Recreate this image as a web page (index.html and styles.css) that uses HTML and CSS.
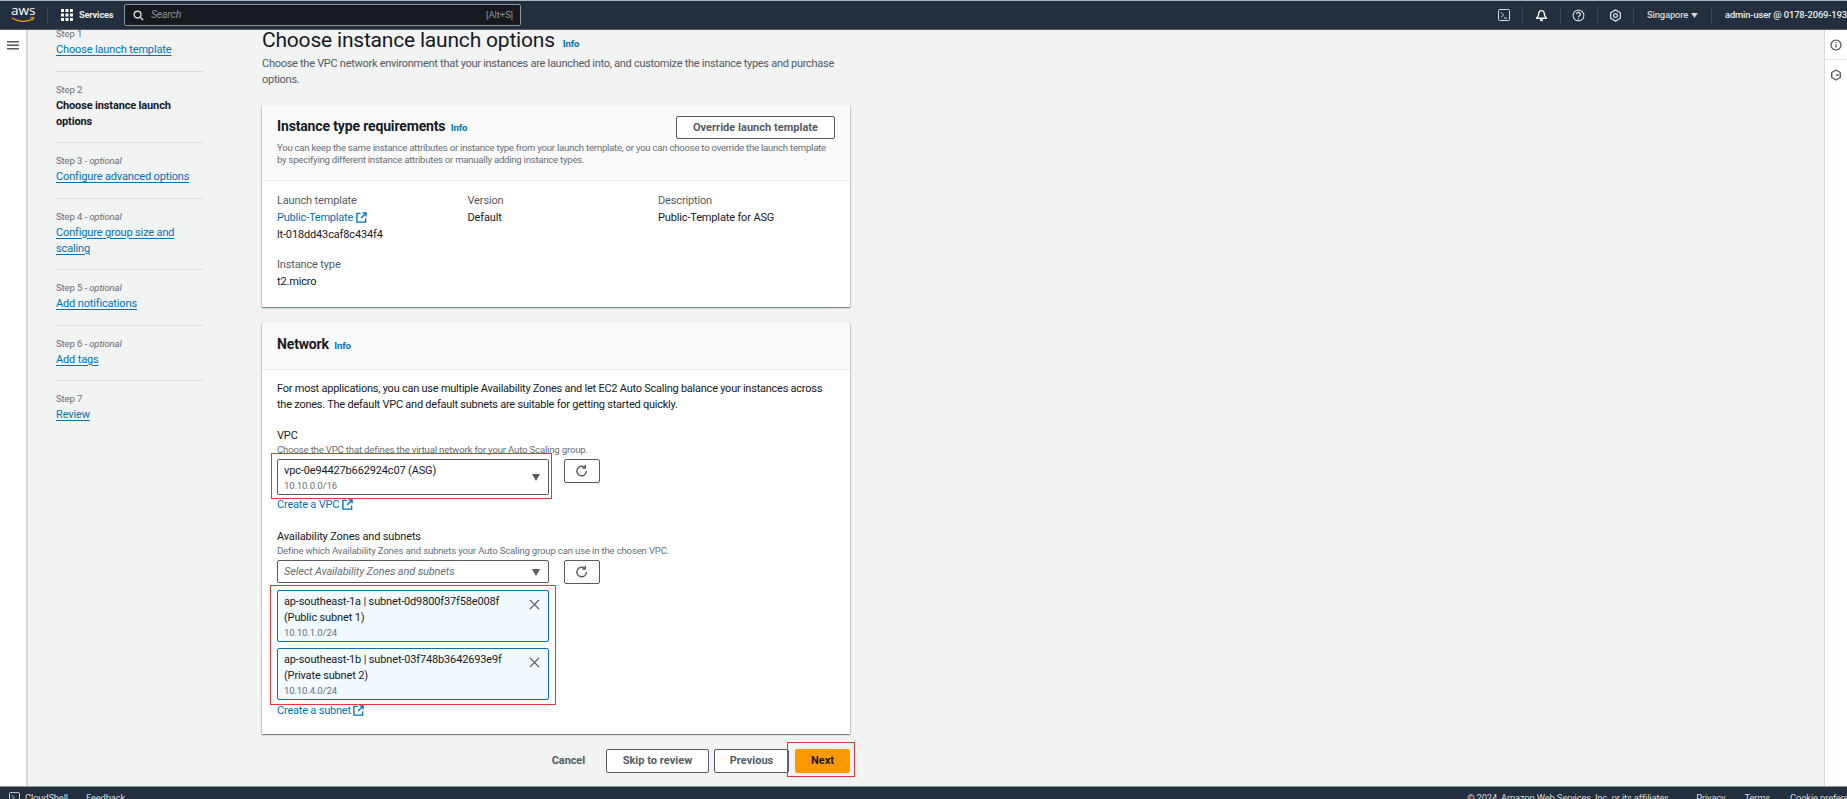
FILE: index.html
```html
<!DOCTYPE html>
<html lang="en">
<head>
<meta charset="utf-8">
<title>Choose instance launch options</title>
<link rel="stylesheet" href="styles.css">
</head>
<body>
<div class="app">
  <header class="topbar">
    <div class="logo"><span class="logo-text">aws</span>
      <svg class="logo-smile" viewBox="0 0 24 6" width="24" height="6"><path d="M1 1c6 4 15 4.500 21 .8" fill="none" stroke="#f90" stroke-width="1.300"/><path d="M19.500 .6l3.500-.3-1.200 3.200" fill="none" stroke="#f90" stroke-width="1"/></svg>
    </div>
    <span class="sep sep-logo"></span>
    <svg class="grid-icon" viewBox="0 0 12 12" width="12" height="12" fill="#fff"><rect x="0" y="0" width="3" height="3"/><rect x="4.500" y="0" width="3" height="3"/><rect x="9" y="0" width="3" height="3"/><rect x="0" y="4.500" width="3" height="3"/><rect x="4.500" y="4.500" width="3" height="3"/><rect x="9" y="4.500" width="3" height="3"/><rect x="0" y="9" width="3" height="3"/><rect x="4.500" y="9" width="3" height="3"/><rect x="9" y="9" width="3" height="3"/></svg>
    <span class="services">Services</span>
    <div class="search">
      <svg viewBox="0 0 12 12" width="11" height="11" fill="none" stroke="#d5dbdb" stroke-width="1.500"><circle cx="5" cy="5" r="3.700"/><path d="M7.800 7.800L11 11"/></svg>
      <span class="search-text">Search</span>
      <span class="search-key">[Alt+S]</span>
    </div>
    <div class="top-right">
      <svg class="ti ti-term" viewBox="0 0 12 12" width="12" height="12" fill="none" stroke="#d5dbdb" stroke-width="1"><rect x=".5" y=".5" width="11" height="11" rx="1"/><path d="M3 3.500L5.500 6 3 8.500M6 9h3"/></svg>
      <span class="sep"></span>
      <svg class="ti ti-bell" viewBox="0 0 14 14" width="13" height="13" fill="none" stroke="#fff" stroke-width="1.500"><path d="M7 1.800c-2 0-3 1.500-3 3.400 0 2-.8 3.300-2.400 4.800h10.800C10.800 8.500 10 7.200 10 5.200c0-1.900-1-3.400-3-3.400z" stroke-linejoin="round"/><path d="M5.500 12h3" stroke-width="2"/></svg>
      <span class="sep"></span>
      <svg class="ti ti-help" viewBox="0 0 14 14" width="13" height="13" fill="none" stroke="#d5dbdb" stroke-width="1.200"><circle cx="7" cy="7" r="5.800"/><path d="M5 5.500a2 2 0 1 1 3 1.800c-.7.400-1 .8-1 1.700" stroke-width="1.400"/><path d="M7 10v1.200" stroke-width="1.400"/></svg>
      <span class="sep"></span>
      <svg class="ti ti-gear" viewBox="0 0 14 14" width="13" height="13" fill="none" stroke="#d5dbdb" stroke-width="1.400"><circle cx="7" cy="7" r="2"/><path d="M7 1l5.200 3v6L7 13l-5.200-3V4z" stroke-linejoin="round"/></svg>
      <span class="sep"></span>
      <span class="region">Singapore</span>
      <svg class="region-caret" viewBox="0 0 8 6" width="7" height="5" fill="#d5dbdb"><path d="M0 0h8L4 6z"/></svg>
      <span class="sep"></span>
      <span class="account">admin-user @ 0178-2069-1935</span>
    </div>
  </header>

  <div class="shell">
    <aside class="rail-left">
      <svg viewBox="0 0 12 9" width="12" height="9" fill="#545b64"><rect width="12" height="1.500"/><rect y="3.500" width="12" height="1.500"/><rect y="7" width="12" height="1.500"/></svg>
    </aside>

    <nav class="steps">
      <div class="step"><div class="step-label">Step 1</div><a class="step-link">Choose launch template</a></div>
      <div class="step"><div class="step-label">Step 2</div><div class="step-current">Choose instance launch options</div></div>
      <div class="step"><div class="step-label">Step 3 - <i>optional</i></div><a class="step-link">Configure advanced options</a></div>
      <div class="step"><div class="step-label">Step 4 - <i>optional</i></div><a class="step-link step-link-narrow">Configure group size and scaling</a></div>
      <div class="step"><div class="step-label">Step 5 - <i>optional</i></div><a class="step-link">Add notifications</a></div>
      <div class="step"><div class="step-label">Step 6 - <i>optional</i></div><a class="step-link">Add tags</a></div>
      <div class="step step-last"><div class="step-label">Step 7</div><a class="step-link">Review</a></div>
    </nav>

    <main class="content">
      <h1 class="page-title">Choose instance launch options <a class="info">Info</a></h1>
      <p class="page-desc">Choose the VPC network environment that your instances are launched into, and customize the instance types and purchase options.</p>

      <section class="card card-type">
        <div class="card-head">
          <div class="head-row">
            <h2 class="card-title">Instance type requirements <a class="info">Info</a></h2>
            <button class="btn btn-override">Override launch template</button>
          </div>
          <p class="card-desc">You can keep the same instance attributes or instance type from your launch template, or you can choose to override the launch template by specifying different instance attributes or manually adding instance types.</p>
        </div>
        <div class="card-body details">
          <div class="detail-col">
            <div class="muted">Launch template</div>
            <div><a class="link">Public-Template <svg class="ext" viewBox="0 0 12 12" width="11" height="11" fill="none" stroke="#0073bb" stroke-width="1.500"><path d="M5 1.500H1v9.500h9.500V7M7 1h4v4M11 1L5.500 6.500"/></svg></a></div>
            <div>lt-018dd43caf8c434f4</div>
          </div>
          <div class="detail-col">
            <div class="muted">Version</div>
            <div>Default</div>
          </div>
          <div class="detail-col">
            <div class="muted">Description</div>
            <div>Public-Template for ASG</div>
          </div>
          <div class="detail-col detail-type">
            <div class="muted">Instance type</div>
            <div>t2.micro</div>
          </div>
        </div>
      </section>

      <section class="card card-network">
        <div class="card-head card-head-small">
          <h2 class="card-title">Network <a class="info">Info</a></h2>
        </div>
        <div class="card-body card-body-network">
          <p class="network-intro">For most applications, you can use multiple Availability Zones and let EC2 Auto Scaling balance your instances across the zones. The default VPC and default subnets are suitable for getting started quickly.</p>

          <div class="field">
            <div class="field-label">VPC</div>
            <div class="field-hint">Choose the VPC that defines the virtual network for your Auto Scaling group.</div>
            <div class="select-row">
              <div class="select select-tall">
                <div class="select-main">vpc-0e94427b662924c07 (ASG)</div>
                <div class="sub">10.10.0.0/16</div>
                <svg class="caret" viewBox="0 0 8 7" width="8" height="7" fill="#545b64"><path d="M0 0h8L4 7z"/></svg>
                <span class="annot annot-vpc"></span>
              </div>
              <button class="btn btn-refresh"><svg viewBox="0 0 14 14" width="14" height="14" fill="none" stroke="#545b64" stroke-width="1.400"><path d="M11.500 7a4.800 4.800 0 1 1-1.600-3.600"/><path d="M10.300 .8v3.200H7.100"/></svg></button>
            </div>
            <a class="link field-link">Create a VPC <svg class="ext" viewBox="0 0 12 12" width="11" height="11" fill="none" stroke="#0073bb" stroke-width="1.500"><path d="M5 1.500H1v9.500h9.500V7M7 1h4v4M11 1L5.500 6.500"/></svg></a>
          </div>

          <div class="field field-az">
            <div class="field-label">Availability Zones and subnets</div>
            <div class="field-hint">Define which Availability Zones and subnets your Auto Scaling group can use in the chosen VPC.</div>
            <div class="select-row">
              <div class="select select-short">
                <div class="placeholder">Select Availability Zones and subnets</div>
                <svg class="caret" viewBox="0 0 8 7" width="8" height="7" fill="#545b64"><path d="M0 0h8L4 7z"/></svg>
              </div>
              <button class="btn btn-refresh"><svg viewBox="0 0 14 14" width="14" height="14" fill="none" stroke="#545b64" stroke-width="1.400"><path d="M11.500 7a4.800 4.800 0 1 1-1.600-3.600"/><path d="M10.300 .8v3.200H7.100"/></svg></button>
            </div>
            <div class="tokens">
              <span class="annot annot-tokens"></span>
              <div class="token">
                <div>ap-southeast-1a | subnet-0d9800f37f58e008f</div>
                <div>(Public subnet 1)</div>
                <div class="sub">10.10.1.0/24</div>
                <svg class="token-x" viewBox="0 0 12 12" width="11" height="11" fill="none" stroke="#545b64" stroke-width="1.400"><path d="M1 1l10 10M11 1L1 11"/></svg>
              </div>
              <div class="token">
                <div>ap-southeast-1b | subnet-03f748b3642693e9f</div>
                <div>(Private subnet 2)</div>
                <div class="sub">10.10.4.0/24</div>
                <svg class="token-x" viewBox="0 0 12 12" width="11" height="11" fill="none" stroke="#545b64" stroke-width="1.400"><path d="M1 1l10 10M11 1L1 11"/></svg>
              </div>
            </div>
            <a class="link field-link field-link-subnet">Create a subnet <svg class="ext" viewBox="0 0 12 12" width="11" height="11" fill="none" stroke="#0073bb" stroke-width="1.500"><path d="M5 1.500H1v9.500h9.500V7M7 1h4v4M11 1L5.500 6.500"/></svg></a>
          </div>
        </div>
      </section>

      <div class="actions">
        <button class="btn-plain">Cancel</button>
        <button class="btn btn-skip">Skip to review</button>
        <button class="btn btn-prev">Previous</button>
        <button class="btn btn-next">Next<span class="annot annot-next"></span></button>
      </div>
    </main>

    <aside class="rail-right">
      <div class="rail-item">
        <svg viewBox="0 0 14 14" width="12" height="12" fill="none" stroke="#545b64" stroke-width="1.500"><circle cx="7" cy="7" r="5.800"/><path d="M7 6v4M7 3.500v1.300"/></svg>
      </div>
      <div class="rail-item rail-item-second">
        <svg viewBox="0 0 14 14" width="12" height="12" fill="none" stroke="#545b64" stroke-width="1.600"><path d="M7 1.200l5 2.900v5.800l-5 2.900-5-2.900V4.100z" stroke-linejoin="round"/><path d="M7 7h3.500"/></svg>
      </div>
    </aside>
  </div>

  <footer class="footer">
    <svg viewBox="0 0 12 12" width="11" height="11" fill="none" stroke="#d5dbdb" stroke-width="1"><rect x=".5" y=".5" width="11" height="11" rx="1"/><path d="M3 3.500L5.500 6 3 8.500"/></svg>
    <span class="foot-cloud">CloudShell</span>
    <span class="foot-feedback">Feedback</span>
    <span class="foot-copy">© 2024, Amazon Web Services, Inc. or its affiliates.</span>
    <span class="foot-privacy">Privacy</span>
    <span class="foot-terms">Terms</span>
    <span class="foot-cookie">Cookie preferences</span>
  </footer>
</div>
</body>
</html>
```
FILE: styles.css
```css
* { box-sizing: border-box; }
html, body { margin: 0; height: 100%; }
body {
  font-family: Roboto, "Noto Sans", "Liberation Sans", sans-serif;
  font-size: 11px;
  letter-spacing: -.15px;
  line-height: 16px;
  color: #16191f;
  background: #f2f3f3;
  overflow: hidden;
}
p, h1, h2 { margin: 0; }
a { color: #0073bb; }

.app { display: flex; flex-direction: column; width: 1847px; height: 799px; overflow: hidden; }

/* top bar */
.topbar {
  position: relative;
  z-index: 2;
  flex: none;
  display: flex;
  align-items: center;
  height: 30px;
  background: #232f3e;
  border-top: 1px solid #aab7b8;
  border-bottom: 1px solid #545b64;
  color: #d5dbdb;
  padding-left: 11px;
}
.logo { display: flex; flex-direction: column; align-items: flex-start; width: 24px; margin-top: -2px; }
.logo-text { font-family: "Open Sans", sans-serif; font-size: 13.500px; font-weight: 500; letter-spacing: 0; line-height: 11px; color: #fff; }
.logo-smile { margin-top: 1px; }
.sep { flex: none; width: 1px; height: 17px; background: #3b4654; }
.sep-logo { margin-left: 12px; }
.grid-icon { margin-left: 13px; }
.services { margin-left: 6px; font-size: 9.200px; font-weight: 700; color: #eaeded; width: 31px; white-space: nowrap; }
.search {
  display: flex;
  align-items: center;
  margin-left: 14px;
  width: 397px;
  height: 22px;
  padding: 0 7px 0 8px;
  background: #16191f;
  border: 1px solid #879596;
  border-radius: 2px;
}
.search-text { margin-left: 7px; font-style: italic; color: #879596; font-size: 10.400px; }
.search-key { margin-left: auto; color: #879596; font-size: 9.600px; }

.top-right { margin-left: auto; display: flex; align-items: center; width: 349px; overflow: hidden; }
.ti { flex: none; }
.ti-term { margin-right: 12px; }
.ti-bell { margin: 0 12px 0 12px; }
.ti-help { margin: 0 12px 0 11px; }
.ti-gear { margin: 0 11px 0 11px; }
.region { margin-left: 13px; font-size: 9.400px; font-weight: 500; color: #d5dbdb; width: 39px; white-space: nowrap; }
.region-caret { margin: 0 13px 0 5px; flex: none; }
.account { margin-left: 13px; font-size: 9.400px; font-weight: 500; color: #eaeded; white-space: nowrap; }

/* shell */
.shell { flex: 1; min-height: 0; display: flex; }
.rail-left {
  flex: none;
  width: 28px;
  background: #fff;
  border-right: 2px solid #d5dbdb;
  padding: 11px 0 0 7px;
}
.rail-left svg { display: block; }

.steps { flex: none; margin-top: -4px; margin-left: 28px; width: 147px; }
.step { padding-bottom: 12.500px; border-bottom: 1px solid #d5dbdb; margin-bottom: 10px; }
.step-last { border-bottom: 0; }
.step-label { color: #687078; font-size: 9.600px; }
.step-label i { font-size: 9.600px; }
.step-link { color: #0073bb; text-decoration: underline; text-underline-offset: 2px; }
.step-link-narrow { display: block; width: 125px; }
.step-current { font-weight: 700; width: 125px; }

.content { flex: none; width: 588px; margin-left: 59px; }
.page-title {
  font-size: 21px;
  font-weight: 400;
  letter-spacing: -.2px;
  line-height: 20px;
  height: 20px;
  color: #16191f;
}
.info { font-size: 9.600px; line-height: 10px; font-weight: 700; letter-spacing: -.1px; color: #0073bb; margin-left: 3px; }
.page-desc { margin-top: 6px; color: #545b64; letter-spacing: -.28px; }

.card {
  background: #fff;
  box-shadow: 0 1px 1px 0 rgba(0, 28, 36, .3), 1px 1px 1px 0 rgba(0, 28, 36, .15), -1px 1px 1px 0 rgba(0, 28, 36, .15);
}
.card-type { margin-top: 17px; }
.card-network { margin-top: 16px; }
.card-head { background: #fafafa; border-bottom: 1px solid #eaeded; padding: 11px 15px 14px; }
.card-head-small { padding-bottom: 0; height: 47px; }
.head-row { display: flex; justify-content: space-between; align-items: flex-start; height: 23px; }
.card-title { font-size: 14px; font-weight: 700; letter-spacing: -.15px; line-height: 20px; height: 20px; }
.card-title .info { margin-left: 2px; }
.card-desc { margin-top: 3px; font-size: 9.600px; letter-spacing: -.25px; line-height: 12px; color: #687078; }

.btn {
  display: inline-flex;
  align-items: center;
  justify-content: center;
  padding: 0;
  font: 700 11px/16px Roboto, sans-serif;
  letter-spacing: .03px;
  color: #545b64;
  background: #fff;
  border: 1px solid #545b64;
  border-radius: 2px;
}
.btn-override { width: 159px; height: 23px; }
.btn-refresh { flex: none; width: 36px; height: 24px; margin-left: 15.500px; }
.btn-skip { width: 103px; height: 24px; margin-left: 21px; }
.btn-prev { width: 75px; height: 24px; margin-left: 5px; }
.btn-next {
  position: relative;
  width: 55px;
  height: 24px;
  margin-left: 6px;
  background: #ff9900;
  border-color: #ff9900;
  color: #16191f;
}
.btn-plain { padding: 0; border: 0; background: none; font: 700 11px/16px Roboto, sans-serif; letter-spacing: -.1px; color: #545b64; }

.card-body { padding: 11px 15px 17px; }
.card-body-network { padding: 10px 15px 15px; }
.details { display: grid; grid-template-columns: repeat(3, 190.500px); line-height: 17px; }
.detail-type { grid-column: 1 / -1; margin-top: 13px; }
.muted { color: #545b64; }
.link { color: #0073bb; letter-spacing: -.2px; }
.ext { vertical-align: -2px; }

.network-intro { margin-top: 1px; letter-spacing: -.24px; }
.field { margin-top: 15px; }
.field-az { margin-top: 16px; }
.field-label { color: #16191f; }
.field-hint { font-size: 9.600px; line-height: 12px; letter-spacing: -.18px; color: #687078; margin-bottom: 3px; }
.select-row { display: flex; align-items: flex-start; }
.select {
  position: relative;
  flex: none;
  width: 271.500px;
  background: #fff;
  border: 1px solid #545b64;
  border-radius: 2px;
  padding: 3px 6px 0;
}
.select-tall { height: 36px; }
.select-short { height: 23px; }
.select-main { line-height: 16px; }
.sub { font-size: 9.600px; line-height: 13px; color: #687078; }
.placeholder { font-style: italic; color: #687078; }
.caret { position: absolute; right: 8px; top: 14px; }
.select-short .caret { top: 8px; }
.field-link { display: block; margin-top: 2px; height: 16px; }
.field-link-subnet { margin-top: 3px; }

.tokens { position: relative; display: flex; flex-direction: column; gap: 6px; margin-top: 6px; width: 271.500px; }
.token {
  position: relative;
  height: 52px;
  padding: 3px 6px;
  background: #f1faff;
  border: 1px solid #0073bb;
  border-radius: 2px;
}
.token-x { position: absolute; right: 8px; top: 8px; }

.annot { position: absolute; border: 1.500px solid #e8333f; pointer-events: none; z-index: 1; }
.annot-vpc { left: -7px; right: -4px; top: -7px; bottom: -5px; }
.annot-tokens { left: -7px; right: -7.500px; top: -5px; bottom: -5px; }
.annot-next { left: -9px; right: -6px; top: -8px; bottom: -5px; }

.actions { display: flex; justify-content: flex-end; align-items: center; margin-top: 15px; }

.rail-right { flex: none; margin-left: auto; width: 23px; background: #fff; border-left: 1px solid #d5dbdb; }
.rail-item { height: 30px; display: flex; justify-content: center; align-items: center; border-bottom: 1px solid #eaeded; }
.rail-item-second { border-bottom: 0; }

/* footer */
.footer {
  flex: none;
  position: relative;
  display: flex;
  align-items: flex-start;
  height: 13px;
  background: #232f3e;
  border-top: 1px solid #879596;
  padding: 5px 0 0 9px;
  font-size: 9.400px;
  line-height: 12px;
  color: #d5dbdb;
  white-space: nowrap;
}
.foot-cloud { margin-left: 5px; }
.foot-feedback { margin-left: 18px; }
.foot-copy { margin-left: auto; }
.foot-privacy { margin-left: 25px; }
.foot-terms { margin-left: 19px; }
.foot-cookie { margin-left: 20px; width: 57px; overflow: hidden; }
```
